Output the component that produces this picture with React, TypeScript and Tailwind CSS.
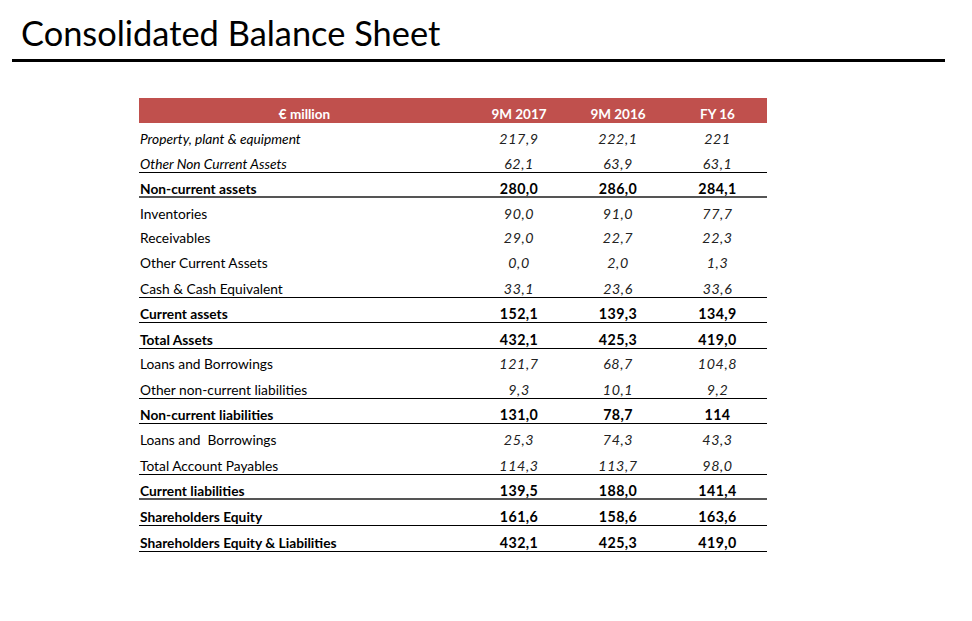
import React from "react";

type Row = {
  label: string;
  vals: [string, string, string];
  kind: "italic" | "normal" | "bold";
  h: number;
  border?: "black" | "gray";
};

const rows: Row[] = [
  { label: "Property, plant & equipment", vals: ["217,9", "222,1", "221"], kind: "italic", h: 25 },
  { label: "Other Non Current Assets", vals: ["62,1", "63,9", "63,1"], kind: "italic", h: 25, border: "black" },
  { label: "Non-current assets", vals: ["280,0", "286,0", "284,1"], kind: "bold", h: 25, border: "gray" },
  { label: "Inventories", vals: ["90,0", "91,0", "77,7"], kind: "normal", h: 25 },
  { label: "Receivables", vals: ["29,0", "22,7", "22,3"], kind: "normal", h: 24 },
  { label: "Other Current Assets", vals: ["0,0", "2,0", "1,3"], kind: "normal", h: 25 },
  { label: "Cash & Cash Equivalent", vals: ["33,1", "23,6", "33,6"], kind: "normal", h: 26, border: "black" },
  { label: "Current assets", vals: ["152,1", "139,3", "134,9"], kind: "bold", h: 25, border: "black" },
  { label: "Total Assets", vals: ["432,1", "425,3", "419,0"], kind: "bold", h: 26, border: "black" },
  { label: "Loans and Borrowings", vals: ["121,7", "68,7", "104,8"], kind: "normal", h: 24 },
  { label: "Other non-current liabilities", vals: ["9,3", "10,1", "9,2"], kind: "normal", h: 26, border: "black" },
  { label: "Non-current liabilities", vals: ["131,0", "78,7", "114"], kind: "bold", h: 25, border: "black" },
  { label: "Loans and\u00a0 Borrowings", vals: ["25,3", "74,3", "43,3"], kind: "normal", h: 25 },
  { label: "Total Account Payables", vals: ["114,3", "113,7", "98,0"], kind: "normal", h: 26, border: "black" },
  { label: "Current liabilities", vals: ["139,5", "188,0", "141,4"], kind: "bold", h: 25, border: "gray" },
  { label: "Shareholders Equity", vals: ["161,6", "158,6", "163,6"], kind: "bold", h: 26, border: "black" },
  { label: "Shareholders Equity & Liabilities", vals: ["432,1", "425,3", "419,0"], kind: "bold", h: 26, border: "black" },
];

const font = { fontFamily: "Lato, 'Open Sans', sans-serif" };

export default function App() {
  return (
    <div className="w-[972px] h-[621px] bg-white overflow-hidden" style={font}>
      <div className="pt-[13px] pl-[21px] h-[59px]">
        <h1 className="text-[34.4px] leading-[40px] text-black font-normal">
          Consolidated Balance Sheet
        </h1>
      </div>
      <div className="ml-[12px] w-[933px] h-[3px] bg-black" />
      <div className="ml-[139px] mt-[36px] w-[628px]">
        <div className="grid grid-cols-[331px_98px_100px_99px] h-[25px] bg-[#c0504d] text-white font-bold text-[13.5px] items-end pb-[1px]">
          <div className="text-center leading-[16px]">€ million</div>
          <div className="text-center leading-[16px]">9M 2017</div>
          <div className="text-center leading-[16px]">9M 2016</div>
          <div className="text-center leading-[16px]">FY 16</div>
        </div>
        {rows.map((r, i) => {
          const border =
            r.border === "black"
              ? "shadow-[inset_0_-1px_0_#000000]"
              : r.border === "gray"
              ? "shadow-[inset_0_-2px_0_#555555]"
              : "";
          const labelCls =
            r.kind === "italic" ? "italic" : r.kind === "bold" ? "font-bold" : "";
          const valCls =
            r.kind === "bold"
              ? "font-bold tracking-[0.4px]"
              : "italic text-[#222] tracking-[0.6px]";
          return (
            <div
              key={i}
              className={`grid grid-cols-[331px_98px_100px_99px] items-end pb-[1px] text-[13.75px] text-black ${border}`}
              style={{ height: r.h }}
            >
              <div className={`pl-[1px] leading-[16px] ${labelCls}`}>{r.label}</div>
              {r.vals.map((v, j) => (
                <div key={j} className={`text-center leading-[16px] text-[14.25px] ${valCls}`}>
                  {v}
                </div>
              ))}
            </div>
          );
        })}
      </div>
    </div>
  );
}
